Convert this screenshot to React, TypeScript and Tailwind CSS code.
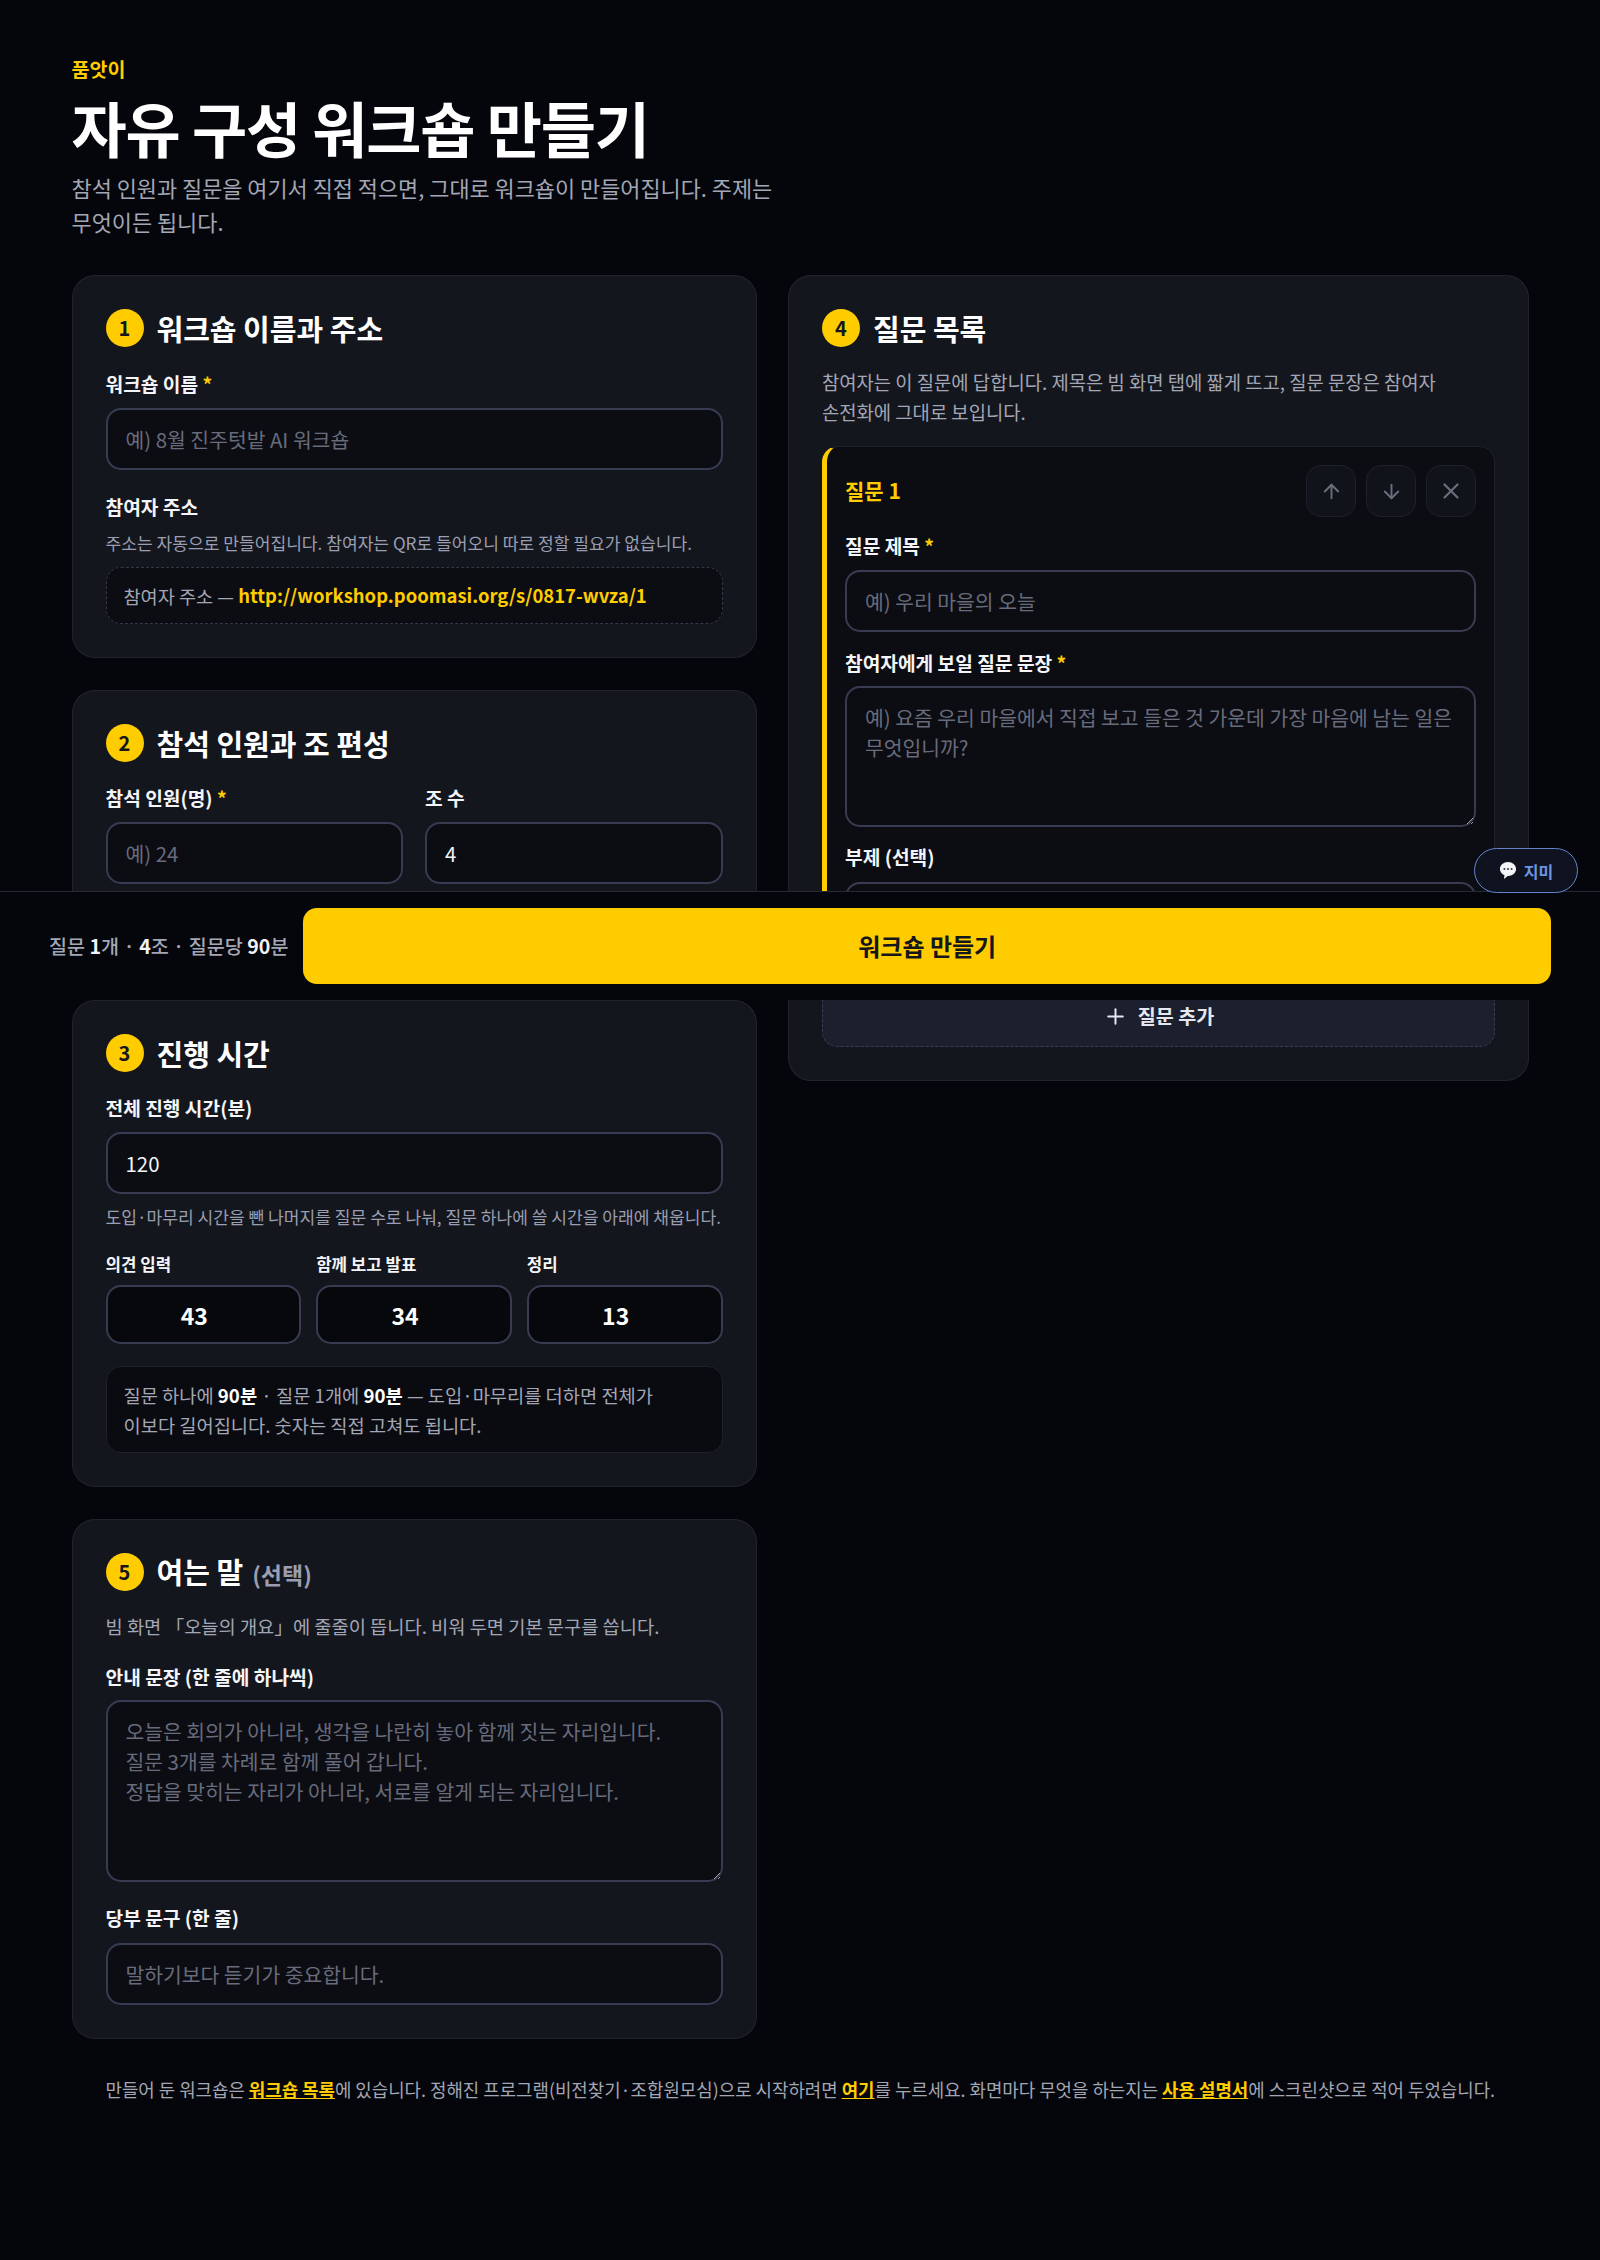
import React from 'react';
import { ArrowUp, ArrowDown, X, Plus } from 'lucide-react';

const inputClass =
  'block w-full h-[62px] rounded-[15px] border-2 border-[#383c52] bg-[#0c0d13] px-[18px] text-[20.4px] text-[#f2f3f7] placeholder:text-[#686b7b] outline-none';

const areaClass =
  'block w-full rounded-[15px] border-2 border-[#383c52] bg-[#0c0d13] px-[18px] py-[14px] text-[20.4px] leading-[30px] text-[#f2f3f7] placeholder:text-[#686b7b] outline-none';

const Star = () => <span className="text-[#ffcc00]"> *</span>;

const Label = ({ children, className = '' }: any) => (
  <label className={`block text-[19.2px] leading-[28px] font-bold text-[#f4f5f8] ${className}`}>{children}</label>
);

const Section = ({ num, title, extra, className = '', children }: any) => (
  <section className={`rounded-[23px] bg-[#14161e] shadow-[inset_0_0_0_1px_#20232e] p-[34px] ${className}`}>
    <div className="flex items-center gap-[13px] h-[38px]">
      <span className="flex h-[38px] w-[38px] items-center justify-center rounded-full bg-[#ffcc00] text-[20px] font-bold text-[#14161e]">
        {num}
      </span>
      <h2 className="text-[29px] leading-[38px] font-bold text-white">
        {title}
        {extra && <span className="ml-[9px] text-[23px] font-bold text-[#9a9eb0]">{extra}</span>}
      </h2>
    </div>
    {children}
  </section>
);

const IconBtn = ({ icon: Icon, size = 23 }: any) => (
  <button className="flex h-[52px] w-[50px] items-center justify-center rounded-[15px] border border-[#1e212d] bg-[#11131a] text-[#6b6e7d]">
    <Icon size={size} strokeWidth={2} />
  </button>
);

const TimeBox = ({ label, value }: any) => (
  <div>
    <label className="block text-[16.8px] leading-[24px] font-bold text-[#f4f5f8]">{label}</label>
    <input
      readOnly
      value={value}
      className="mt-[9px] block h-[59px] w-full rounded-[15px] border-2 border-[#383c52] bg-[#07080c] pr-[18px] text-center text-[23px] font-bold text-white outline-none"
    />
  </div>
);

export default function App() {
  return (
    <div className="relative min-h-[2260px] break-keep bg-[#05060b] font-['Noto_Sans_CJK_KR','Noto_Sans',sans-serif] text-[#f2f3f7]">
      <main className="pl-[71.5px] pr-[71px] pt-[55px]">
        <p className="text-[19.5px] leading-[28px] font-bold text-[#ffcc00]">품앗이</p>
        <h1 className="mt-[8px] text-[60px] leading-[72px] font-bold tracking-[-0.02em] text-white">
          자유 구성 워크숍 만들기
        </h1>
        <p className="mt-[8px] w-[720px] text-[21.9px] leading-[33.6px] text-[#a3a6b4]">
          참석 인원과 질문을 여기서 직접 적으면, 그대로 워크숍이 만들어집니다. 주제는 무엇이든 됩니다.
        </p>

        <div className="mt-[37px] grid grid-cols-[685px_741px] items-start gap-[31.5px]">
          <div className="flex flex-col gap-[32px]">
            <Section num="1" title="워크숍 이름과 주소">
              <Label className="mt-[23px]">
                워크숍 이름
                <Star />
              </Label>
              <input className={`${inputClass} mt-[10px]`} placeholder="예) 8월 진주텃밭 AI 워크숍" />
              <Label className="mt-[23px]">참여자 주소</Label>
              <p className="mt-[8px] text-[17.1px] leading-[28px] text-[#9a9eb0]">
                주소는 자동으로 만들어집니다. 참여자는 QR로 들어오니 따로 정할 필요가 없습니다.
              </p>
              <div className="mt-[10px] flex h-[57px] items-center rounded-[15px] border border-dashed border-[#34384b] bg-[#0c0d13] px-[17px] text-[18.6px] text-[#a3a6b4]">
                참여자 주소 —&nbsp;<span className="text-[18.45px] font-bold text-[#ffcc00]">http://workshop.poomasi.org/s/0817-wvza/1</span>
              </div>
            </Section>

            <Section num="2" title="참석 인원과 조 편성" className="h-[278px]">
              <div className="mt-[22px] grid grid-cols-2 gap-[22px]">
                <div>
                  <Label>
                    참석 인원(명)
                    <Star />
                  </Label>
                  <input className={`${inputClass} mt-[10px]`} placeholder="예) 24" />
                </div>
                <div>
                  <Label>조 수</Label>
                  <input className={`${inputClass} mt-[10px]`} defaultValue="4" />
                </div>
              </div>
            </Section>

            <Section num="3" title="진행 시간">
              <Label className="mt-[22px]">전체 진행 시간(분)</Label>
              <input className={`${inputClass} mt-[10px]`} defaultValue="120" />
              <p className="mt-[9px] text-[17.1px] leading-[28px] text-[#9a9eb0]">
                도입·마무리 시간을 뺀 나머지를 질문 수로 나눠, 질문 하나에 쓸 시간을 아래에 채웁니다.
              </p>
              <div className="mt-[21px] grid grid-cols-3 gap-[15px]">
                <TimeBox label="의견 입력" value="43" />
                <TimeBox label="함께 보고 발표" value="34" />
                <TimeBox label="정리" value="13" />
              </div>
              <div className="mt-[22px] h-[87px] rounded-[15px] border border-[#1e212d] bg-[#0a0b10] px-[17px] py-[13px] text-[18.7px] leading-[30px] text-[#a3a6b4]">
                질문 하나에 <b className="text-white">90분</b> · 질문 1개에 <b className="text-white">90분</b> — 도입·마무리를 더하면 전체가
                <br />
                이보다 길어집니다. 숫자는 직접 고쳐도 됩니다.
              </div>
            </Section>

            <Section num="5" title="여는 말" extra="(선택)">
              <p className="mt-[20px] text-[18.7px] leading-[30px] text-[#a3a6b4]">
                빔 화면 「오늘의 개요」에 줄줄이 뜹니다. 비워 두면 기본 문구를 씁니다.
              </p>
              <Label className="mt-[22px]">안내 문장 (한 줄에 하나씩)</Label>
              <textarea
                className={`${areaClass} mt-[9px] h-[182px]`}
                placeholder={'오늘은 회의가 아니라, 생각을 나란히 놓아 함께 짓는 자리입니다.\n질문 3개를 차례로 함께 풀어 갑니다.\n정답을 맞히는 자리가 아니라, 서로를 알게 되는 자리입니다.'}
              />
              <Label className="mt-[22px]">당부 문구 (한 줄)</Label>
              <input className={`${inputClass} mt-[11px]`} placeholder="말하기보다 듣기가 중요합니다." />
            </Section>
          </div>

          <Section num="4" title="질문 목록">
            <p className="mt-[20px] text-[18.8px] leading-[30px] text-[#a3a6b4]">
              참여자는 이 질문에 답합니다. 제목은 빔 화면 탭에 짧게 뜨고, 질문 문장은 참여자 손전화에 그대로 보입니다.
            </p>
            <div className="mt-[19px] rounded-[16px] border border-l-[5px] border-[#1e212d] border-l-[#ffcc00] bg-[#0c0d13] pb-[19px] pl-[18px] pr-[18px] pt-[18px]">
              <div className="flex items-center justify-between">
                <span className="text-[21px] font-bold text-[#ffcc00]">질문 1</span>
                <div className="flex gap-[10px]">
                  <IconBtn icon={ArrowUp} />
                  <IconBtn icon={ArrowDown} />
                  <IconBtn icon={X} size={26} />
                </div>
              </div>
              <Label className="mt-[15px]">
                질문 제목
                <Star />
              </Label>
              <input className={`${inputClass} mt-[10px]`} placeholder="예) 우리 마을의 오늘" />
              <Label className="mt-[17px]">
                참여자에게 보일 질문 문장
                <Star />
              </Label>
              <textarea
                className={`${areaClass} mt-[9px] h-[141px]`}
                placeholder="예) 요즘 우리 마을에서 직접 보고 들은 것 가운데 가장 마음에 남는 일은 무엇입니까?"
              />
              <Label className="mt-[16px]">부제 (선택)</Label>
              <input className={`${inputClass} mt-[11px]`} />
            </div>
            <button className="mt-[21px] flex h-[62px] w-full items-center justify-center gap-[10px] rounded-[15px] border border-dashed border-[#3a3e54] bg-[#1c1f2e] text-[19.6px] font-bold text-[#e5e7ef]">
              <Plus size={25} strokeWidth={1.9} />
              질문 추가
            </button>
          </Section>
        </div>

        <p className="mt-[36px] text-center text-[17.85px] leading-[28px] text-[#a3a6b4]">
          만들어 둔 워크숍은 <a className="font-bold text-[#ffcc00] underline">워크숍 목록</a>에 있습니다. 정해진 프로그램(비전찾기·조합원모심)으로 시작하려면{' '}
          <a className="font-bold text-[#ffcc00] underline">여기</a>를 누르세요. 화면마다 무엇을 하는지는{' '}
          <a className="font-bold text-[#ffcc00] underline">사용 설명서</a>에 스크린샷으로 적어 두었습니다.
        </p>
      </main>

      {/* sticky action bar */}
      <div className="absolute left-0 right-0 top-[891px] flex h-[109px] items-center gap-[15px] border-t border-[#262936] bg-[#05060b] px-[49px]">
        <span className="whitespace-nowrap text-[19.6px] font-medium text-[#a3a6b4]">
          질문 <b className="text-[#f2f3f7]">1</b>개 · <b className="text-[#f2f3f7]">4</b>조 · 질문당 <b className="text-[#f2f3f7]">90</b>분
        </span>
        <button className="h-[76px] flex-1 rounded-[14px] bg-[#ffcc00] text-[24px] font-bold text-[#14161e]">워크숍 만들기</button>
      </div>

      <button className="absolute left-[1474px] top-[848px] flex h-[45px] w-[104px] items-center justify-center gap-[7px] rounded-full border border-[#6484cc] bg-[#0f1320] text-[16px] font-bold text-[#6d95e0]">
        <svg width="18" height="19" viewBox="0 0 19 20">
          <path d="M9.5 1C4.8 1 1 4.2 1 8.4c0 3 2 5.5 4.8 6.7l-.6 3.9 4-3.2h.3c4.7 0 8.5-3.2 8.5-7.4S14.2 1 9.5 1z" fill="#f4f5f8" />
          <circle cx="5.7" cy="8.4" r="1.1" fill="#3a3e4a" />
          <circle cx="9.5" cy="8.4" r="1.1" fill="#3a3e4a" />
          <circle cx="13.3" cy="8.4" r="1.1" fill="#3a3e4a" />
        </svg>
        지미
      </button>
    </div>
  );
}
